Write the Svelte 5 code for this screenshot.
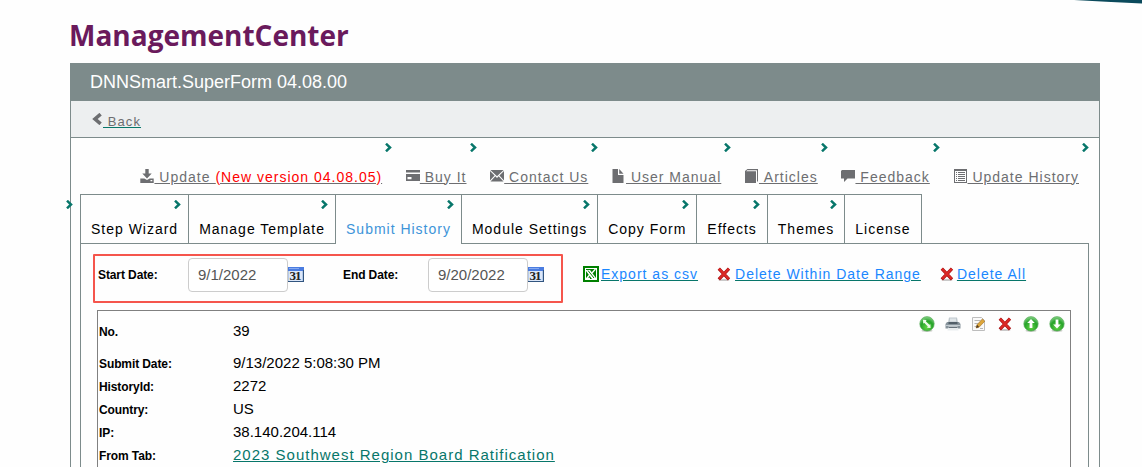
<script lang="ts">
  const links = [
    { icon: "download", label: "Update ", note: "(New version 04.08.05)" },
    { icon: "card", label: "Buy It" },
    { icon: "mail", label: "Contact Us" },
    { icon: "file", label: "User Manual" },
    { icon: "book", label: "Articles" },
    { icon: "comment", label: "Feedback" },
    { icon: "list", label: "Update History" },
  ];

  const tabs = [
    "Step Wizard",
    "Manage Template",
    "Submit History",
    "Module Settings",
    "Copy Form",
    "Effects",
    "Themes",
    "License",
  ];
  let activeTab = $state("Submit History");

  let startDate = $state("9/1/2022");
  let endDate = $state("9/20/2022");

  const record = [
    { label: "Submit Date:", value: "9/13/2022 5:08:30 PM" },
    { label: "HistoryId:", value: "2272" },
    { label: "Country:", value: "US" },
    { label: "IP:", value: "38.140.204.114" },
    { label: "From Tab:", value: "2023 Southwest Region Board Ratification", link: true },
  ];
</script>

{#snippet chevron()}
  <svg class="chevron" viewBox="0 0 7 9" width="7" height="9">
    <path d="M1 .7 5 4.5 1 8.3" fill="none" stroke="#07766a" stroke-width="2.5" />
  </svg>
{/snippet}

{#snippet linkIcon(name: string)}
  <svg class="link-icon" viewBox="0 0 14 14" width="14" height="14" fill="#6d6e71">
    {#if name === "download"}
      <path d="M5.3 0h3.4v4.6h3L7 9.4 2.3 4.6h3zM.3 9.5h4L7 11l2.7-1.5h4V14H.3zM10.5 11v1.2h1.8V11z" fill-rule="evenodd" />
    {:else if name === "card"}
      <path d="M0 1h14.5v2.5H0zM0 5h14.5v7H0zm1.5 3v2.2h4V8z" fill-rule="evenodd" />
    {:else if name === "mail"}
      <path d="M.4 1h13.2L7 7.2zM0 2l4.6 4.6L0 11.4zM14 2v9.4L9.4 6.6zM.5 12.4 5.3 7.3 7 8.9l1.7-1.6 4.8 5.1z" />
    {:else if name === "file"}
      <path d="M.5 0H6v6h5.5v8H.5zM7.2 0l4.3 4.8H7.2z" />
    {:else if name === "book"}
      <path d="M2.5 0H13v12l-1 1V1.3H2.2l-1 1H11V14H0V2z" />
    {:else if name === "comment"}
      <path d="M1 1h13v8.5H6.5L3 13V9.5H0V2z" />
    {:else}
      <path d="M0 0h13v14H0zm1 2v11h11V2zM2 3h1v1H2zm2 0h7v1H4zM2 5h1v1H2zm2 0h7v1H4zM2 7h1v1H2zm2 0h7v1H4zM2 9h1v1H2zm2 0h7v1H4zM2 11h1v1H2zm2 0h7v1H4z" fill-rule="evenodd" />
    {/if}
  </svg>
{/snippet}

{#snippet calendar()}
  <svg class="calendar" viewBox="0 0 16 15" width="16" height="15">
    <rect width="16" height="15" fill="#b6cae9" />
    <path d="M1 4h13v10H1z" fill="#dce7f8" />
    <path d="M0 0h16v4H0z" fill="#4a7ce0" />
    <path d="M1 1h10v1H1z" fill="#86a9ef" />
    <path d="M15 3h1v12H0v-1h15z" fill="#31557f" />
    <text x="7.5" y="13" text-anchor="middle" textLength="12">31</text>
  </svg>
{/snippet}

{#snippet cross()}
  <svg class="cross" viewBox="0 0 14 14" width="14" height="14">
    <ellipse cx="7" cy="12.9" rx="5.5" ry="1" fill="#c9c9c9" />
    <path d="M1.8 1.6 12 12.3M12 1.6 1.8 12.3" stroke="#a60f12" stroke-width="3.2" />
    <path d="M2 1.7 11.6 11.7M11.8 1.7 2.3 11.7" stroke="#dc2a26" stroke-width="2" />
  </svg>
{/snippet}

{#snippet ball(kind: string)}
  <svg viewBox="0 0 16 16" width="16" height="16">
    <ellipse cx="8" cy="14.8" rx="5.5" ry="1.1" fill="#c6cbc4" />
    <circle cx="8" cy="7.8" r="7.2" fill="url(#green)" stroke="#49a34b" stroke-width=".6" />
    {#if kind === "up"}
      <path d="M8 3 4.2 7h2.4v5h2.8V7h2.4z" fill="#fff" />
    {:else if kind === "down"}
      <path d="M8 12.5 4.2 8.5h2.4v-5h2.8v5h2.4z" fill="#fff" />
    {:else}
      <path d="M4 3.8 7.4 3.9 7 5.5l3.4 3.3 1-.6.2 3.8-3.6-.2.8-1.3-3.4-3.6-1.2.7z" fill="#eefbe9" />
    {/if}
  </svg>
{/snippet}

<svg class="swoosh" viewBox="0 0 68 4" width="68" height="4">
  <path d="M0 0h68v3.4L32 1.7z" fill="#0b4a5c" />
</svg>

<main>
  <h1>ManagementCenter</h1>

  <div class="module">
    <div class="module-title">DNNSmart.SuperForm 04.08.00</div>
    <div class="back-bar">
      <svg viewBox="0 0 10 12" width="10" height="12">
        <path d="M8.6 1.2 3 6 8.6 10.8" fill="none" stroke="#6d6e71" stroke-width="3.6" />
      </svg>
      <a href="#back">&nbsp;Back</a>
    </div>

    <nav class="links">
      {#each links as link}
        <div class="link-item">
          {@render chevron()}
          {@render linkIcon(link.icon)}
          <a href="#{link.icon}">&nbsp;{link.label}{#if link.note}<span class="note">{link.note}</span>{/if}</a>
        </div>
      {/each}
    </nav>

    <div class="tabs">
      <span class="outer-chevron">{@render chevron()}</span>
      {#each tabs as tab, i}
        <button class="tab" class:active={tab === activeTab} onclick={() => (activeTab = tab)}>
          {tab}
          {#if i < tabs.length - 1}{@render chevron()}{/if}
        </button>
      {/each}
    </div>

    <div class="panel">
      <div class="toolbar">
        <div class="dates">
          <label for="start">Start Date:</label>
          <input id="start" bind:value={startDate} />
          {@render calendar()}
          <label class="end-label" for="end">End Date:</label>
          <input id="end" bind:value={endDate} />
          {@render calendar()}
        </div>
        <div class="action export">
          <svg viewBox="0 0 16 16" width="16" height="16">
            <path d="M0 0h16v16H0z" fill="#008000" />
            <path d="M2 2h12v12H2z" fill="#fff" />
            <path d="M3 3h10v10H3z" fill="#008000" />
            <path d="M3 4h4l6 8v1H9L3 5z" fill="#fff" />
            <path d="M12.5 3 9 7M6.5 9 4 12M3 12.4h4" stroke="#fff" stroke-width="1.3" />
            <path d="m5 4.5 6 7.5" stroke="#008000" />
          </svg>
          <a href="#export">Export as csv</a>
        </div>
        <div class="action range">
          {@render cross()}
          <a href="#range">Delete Within Date Range</a>
        </div>
        <div class="action all">
          {@render cross()}
          <a href="#all">Delete All</a>
        </div>
      </div>

      <div class="record">
        <div class="row first">
          <b>No.</b>
          <span>39</span>
          <div class="tools">
            {@render ball("status")}
            <svg viewBox="0 0 16 16" width="16" height="16">
              <path d="M4 1.5h8l1 5H3z" fill="#bfc8cd" />
              <path d="M5 2.5h6v3H5z" fill="#dfe5e8" />
              <path d="M2 6h12l1.5 2v4.5H.5V8z" fill="#87939b" />
              <path d="M3.5 6h9v2h-9z" fill="#515e68" />
              <path d="M1 9h14v1H1z" fill="#c4cdd2" />
              <path d="M3.5 10.5h9l1 4h-11z" fill="#e9edef" />
              <path d="M3.5 11h9v1h-9z" fill="#65717a" />
            </svg>
            <svg viewBox="0 0 16 16" width="16" height="16">
              <path d="M1.5 1.5h9l3 3v10h-12z" fill="#fafafa" stroke="#bdbdbd" />
              <path d="M3.5 4.5h6M3.5 7.5h4M3.5 10.5h3M9 12.5h3" stroke="#b7b7b7" />
              <path d="m5.2 12 .8-3.2L11.4 3l2.4 2.2-5.6 5.9z" fill="#dda63a" stroke="#a16b1c" stroke-width=".6" />
              <path d="m5.2 12 .8-3.2 2.2 2.3z" fill="#4d3a24" />
            </svg>
            {@render cross()}
            {@render ball("up")}
            {@render ball("down")}
          </div>
        </div>
        {#each record as field}
          <div class="row">
            <b>{field.label}</b>
            {#if field.link}
              <a href="#tab">{field.value}</a>
            {:else}
              <span>{field.value}</span>
            {/if}
          </div>
        {/each}
      </div>
    </div>
  </div>
</main>

<svg class="defs" width="0" height="0">
  <defs>
    <radialGradient id="green" cx=".5" cy=".75" r=".8">
      <stop offset="0" stop-color="#62d445" />
      <stop offset=".55" stop-color="#26a329" />
      <stop offset="1" stop-color="#9bdc9b" />
    </radialGradient>
  </defs>
</svg>

<style>
  :global(body) {
    background: #fefefe;
    overflow: hidden;
  }

  main {
    box-sizing: border-box;
    width: 1142px;
    height: 467px;
    padding: 15px 42px 0 70px;
    overflow: hidden;
    font-family: "Liberation Sans", Arial, sans-serif;
    font-size: 14px;
    color: #000;
  }

  svg {
    display: block;
    flex: none;
  }

  .swoosh {
    position: absolute;
    top: 0;
    right: 0;
  }

  .defs {
    position: absolute;
  }

  h1 {
    margin: 0 0 0 -1px;
    height: 48px;
    font: 700 28px/40px "Open Sans", sans-serif;
    color: #6a1a5c;
  }

  .module {
    box-sizing: border-box;
    width: 1030px;
    height: 440px;
    border: 1px solid #7d8b8b;
    border-top: 0;
  }

  .module-title {
    height: 38px;
    padding-left: 19px;
    background: #7d8b8b;
    font-size: 18px;
    line-height: 38px;
    color: #fff;
  }

  .back-bar {
    display: flex;
    align-items: center;
    height: 36px;
    padding-left: 21px;
    border-bottom: 1px solid #7d8b8b;
    background: #edeff0;
    font-size: 13px;
  }

  .back-bar svg {
    margin-right: 1px;
  }

  .back-bar a {
    padding-top: 4px;
    letter-spacing: 1.1px;
    color: #6d6e71;
    text-decoration-color: #07766a;
  }

  .links {
    display: flex;
    justify-content: flex-end;
    align-items: flex-end;
    gap: 23.7px;
    height: 48px;
    padding: 0 20px 8px 0;
  }

  .link-item {
    position: relative;
    display: flex;
    align-items: center;
    height: 19px;
    letter-spacing: 1px;
    white-space: nowrap;
  }

  .link-item a {
    color: #6d6e71;
  }

  .link-icon {
    margin-bottom: 2px;
  }

  .link-item .note {
    color: #f00;
  }

  .chevron {
    position: absolute;
    top: 5px;
    right: 7px;
  }

  .link-item > .chevron {
    top: -24px;
    right: -10px;
  }

  .tabs {
    position: relative;
    display: flex;
    height: 49px;
    margin-left: 9px;
  }

  .outer-chevron {
    position: absolute;
    top: 1px;
    left: 0;
  }

  .tab {
    position: relative;
    box-sizing: border-box;
    height: 49px;
    padding: 19px 10px 0;
    border: 1px solid #7d8b8b;
    border-width: 1px 0 0 1px;
    background: #fefefe;
    font: 14px "Liberation Sans", Arial, sans-serif;
    letter-spacing: 0.99px;
    white-space: nowrap;
    color: #000;
  }

  .tab:last-child {
    border-right-width: 1px;
  }

  .tab.active {
    z-index: 1;
    height: 50px;
    padding-bottom: 1px;
    color: #3d94d9;
  }

  .panel {
    width: 977px;
    height: 300px;
    margin-left: 9px;
    padding: 10px 17px 0 13px;
    border: 1px solid #7d8b8b;
  }

  .toolbar {
    display: flex;
    align-items: flex-start;
    height: 56px;
  }

  .dates {
    box-sizing: border-box;
    display: flex;
    width: 470px;
    height: 49px;
    margin-left: -1px;
    padding: 2px 0 0 3px;
    border: 2px solid #f5554c;
    border-radius: 1px;
  }

  .dates label {
    width: 90px;
    font-size: 12px;
    font-weight: 700;
    line-height: 35px;
    letter-spacing: -0.1px;
  }

  .dates .end-label {
    width: 85px;
    margin-left: 39px;
  }

  .dates input {
    box-sizing: border-box;
    width: 100px;
    height: 34px;
    padding: 0 9px 2px;
    border: 1px solid #ccc;
    border-radius: 4px;
    background: #fff;
    font: 15px "Liberation Sans", Arial, sans-serif;
    color: #555;
  }

  .calendar {
    margin-top: 9px;
  }

  .calendar text {
    font: 700 13px "Liberation Serif", serif;
    fill: #222;
  }

  .action {
    display: flex;
    align-items: center;
    height: 40px;
    letter-spacing: 1px;
    white-space: nowrap;
  }

  .action a {
    color: #1a87ff;
    text-decoration-color: #07766a;
  }

  .export {
    gap: 2px;
    margin-left: 20px;
  }

  .range {
    gap: 4px;
    margin-left: 19px;
  }

  .all {
    gap: 3px;
    margin-left: 19px;
  }

  .record {
    box-sizing: border-box;
    width: 974px;
    height: 220px;
    margin-left: 3px;
    border: 1px solid #808080;
  }

  .row {
    display: flex;
    align-items: center;
    height: 23px;
    padding-left: 1px;
    font-size: 15px;
  }

  .row b {
    width: 134px;
    padding-top: 2px;
    font-size: 12px;
    letter-spacing: -0.1px;
  }

  .row.first {
    height: 40px;
  }

  .row.first span {
    padding-bottom: 2px;
  }

  .row.first b {
    padding-top: 1px;
  }

  .row a {
    letter-spacing: 1px;
    color: #07766a;
  }

  .tools {
    display: flex;
    gap: 10px;
    margin: 0 5px 14px auto;
  }

  .tools > .cross {
    margin: 1px;
  }
</style>
